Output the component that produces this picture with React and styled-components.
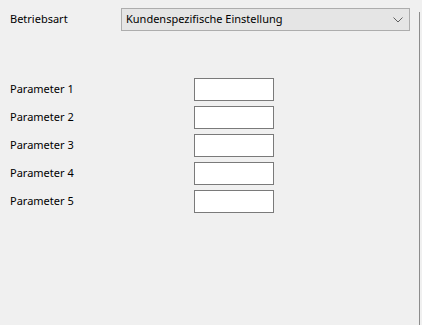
import styled, { createGlobalStyle } from "styled-components";

const GlobalStyle = createGlobalStyle`
  html, body {
    margin: 0;
    padding: 0;
    background: #f0f0f0;
  }
  body {
    font-family: "Segoe UI", "Noto Sans", "Liberation Sans", sans-serif;
    font-size: 11px;
    color: #000;
  }
`;

const Page = styled.div`
  display: flex;
  width: 422px;
  height: 325px;
  background: #f0f0f0;
  overflow: hidden;
`;

const Content = styled.div`
  flex: 0 0 419px;
  display: flex;
  flex-direction: column;
  padding-top: 8px;
`;

const Divider = styled.div`
  flex: 0 0 1px;
  margin-top: 12px;
  background: #8c8c8c;
`;

const TopRow = styled.div`
  display: flex;
  align-items: center;
  height: 23px;
`;

const Label = styled.span`
  width: ${(p) => p.$width || 111}px;
  padding-left: 10px;
  box-sizing: border-box;
  font-size: 11px;
  line-height: 15px;
  margin-top: -2px;
  white-space: nowrap;
`;

const Combo = styled.div`
  display: flex;
  align-items: center;
  justify-content: space-between;
  width: 289px;
  height: 23px;
  box-sizing: border-box;
  border: 1px solid #adadad;
  background: #e5e5e5;
  padding: 0 4px 0 4px;
`;

const ComboText = styled.span`
  font-size: 11px;
  line-height: 15px;
  margin-top: -2px;
  white-space: nowrap;
`;

const ParamList = styled.div`
  display: flex;
  flex-direction: column;
  gap: 5px;
  margin-top: 47px;
`;

const ParamRow = styled.div`
  display: flex;
  align-items: center;
  height: 23px;
`;

const TextBox = styled.div`
  width: 80px;
  height: 23px;
  box-sizing: border-box;
  border: 1px solid #7a7a7a;
  background: #fff;
`;

const Chevron = () => (
  <svg width="10" height="6" viewBox="0 0 10 6" style={{ marginRight: 2 }}>
    <path d="M0.5 0.5 L5 5 L9.5 0.5" fill="none" stroke="#606060" strokeWidth="1" />
  </svg>
);

const params = ["Parameter 1", "Parameter 2", "Parameter 3", "Parameter 4", "Parameter 5"];

export default function App() {
  return (
    <>
      <GlobalStyle />
      <Page>
        <Content>
          <TopRow>
            <Label $width={121}>Betriebsart</Label>
            <Combo>
              <ComboText>Kundenspezifische Einstellung</ComboText>
              <Chevron />
            </Combo>
          </TopRow>
          <ParamList>
            {params.map((p) => (
              <ParamRow key={p}>
                <Label $width={194}>{p}</Label>
                <TextBox />
              </ParamRow>
            ))}
          </ParamList>
        </Content>
        <Divider />
      </Page>
    </>
  );
}
